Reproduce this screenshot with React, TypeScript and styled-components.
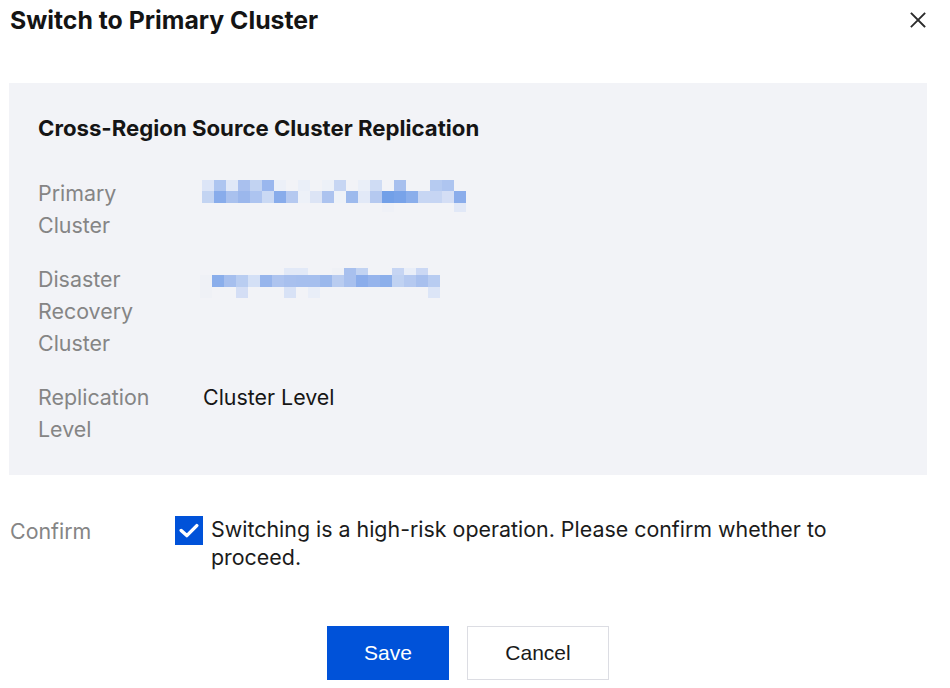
import React from "react";
import styled, { createGlobalStyle } from "styled-components";

const Global = createGlobalStyle`
  html, body { margin: 0; padding: 0; background: #ffffff; }
  body { font-family: Inter, "Noto Sans", "Liberation Sans", sans-serif; color: #1f1f1f; }
  * { box-sizing: border-box; }
`;

const Dialog = styled.div`
  width: 950px;
  height: 688px;
  display: flex;
  flex-direction: column;
`;

const Header = styled.div`
  display: flex;
  align-items: center;
  justify-content: space-between;
  height: 40px;
  padding: 0 22px 0 10px;
`;

const Title = styled.h1`
  margin: 0;
  font-size: 24.8px;
  font-weight: 700;
  color: #141414;
`;

const CloseButton = styled.button`
  border: none;
  background: transparent;
  padding: 0;
  width: 20px;
  height: 20px;
  display: flex;
  align-items: center;
  justify-content: center;
  cursor: pointer;
  color: #2b2b2b;
`;

const Panel = styled.section`
  margin: 43px 23px 0 9px;
  background: #f2f3f7;
  padding: 31px 29px 30px 29px;
  display: flex;
  flex-direction: column;
`;

const PanelTitle = styled.h2`
  margin: 0 0 35px 0;
  font-size: 22.2px;
  line-height: 28px;
  font-weight: 700;
  color: #151515;
`;

const InfoList = styled.dl`
  margin: 0;
  display: flex;
  flex-direction: column;
  gap: 22px;
`;

const InfoRow = styled.div`
  display: grid;
  grid-template-columns: 165px 1fr;
  align-items: start;
`;

const InfoLabel = styled.dt`
  font-size: 21.4px;
  line-height: 32px;
  color: #858585;
  width: 125px;
`;

const InfoValue = styled.dd`
  margin: 0;
  font-size: 21.4px;
  line-height: 32px;
  color: #161616;
`;

const Mosaic = styled.svg<{ $dx: number; $dy: number }>`
  display: block;
  margin-left: ${(p) => p.$dx}px;
  margin-top: ${(p) => p.$dy}px;
`;

const ConfirmRow = styled.div`
  margin: 40px 0 0 10px;
  display: grid;
  grid-template-columns: 165px 1fr;
  align-items: start;
`;

const ConfirmLabel = styled.div`
  font-size: 21.4px;
  line-height: 32px;
  color: #858585;
`;

const CheckLine = styled.label`
  display: flex;
  align-items: flex-start;
  gap: 8px;
  font-size: 21.4px;
  line-height: 28px;
  color: #1b1b1b;
  cursor: pointer;
`;

const CheckBox = styled.span`
  flex: none;
  width: 28px;
  height: 29px;
  margin-top: 1px;
  background: #0052d9;
  display: flex;
  align-items: center;
  justify-content: center;
`;

const CheckText = styled.span`
  max-width: 660px;
`;

const Footer = styled.div`
  margin: 55px 23px 0 9px;
  display: flex;
  justify-content: center;
  gap: 18px;
`;

const Button = styled.button<{ $primary?: boolean; $w: number }>`
  width: ${(p) => p.$w}px;
  height: 54px;
  font-family: "Liberation Sans", Arial, sans-serif;
  font-size: 21px;
  border: 1px solid ${(p) => (p.$primary ? "#0052d9" : "#dcdde3")};
  background: ${(p) => (p.$primary ? "#0052d9" : "#ffffff")};
  color: ${(p) => (p.$primary ? "#ffffff" : "#1a1a1a")};
  cursor: pointer;
  padding: 0;
`;

// Masked cluster identifiers, drawn as pixel blocks
const B = "";
const primaryBlocks: string[][] = [
  ["#dce5f7", "#adc5f0", "#e0e8f7", "#a9c0ee", "#c2d3f2", "#9ab7ee", "#ecf0f8", B, "#eaeff8", B, "#edf1f8", "#c7d6f3", B, "#eaeff8", "#cfdcf4", B, "#a8c0ee", B, B, "#b6cbf1", "#aec5f0", B],
  ["#c3d4f2", "#88aceb", "#a9c1ee", "#9bb7ec", "#adc4f0", "#cad9f4", "#88aceb", "#b5c9f0", "#edf1f8", "#dce4f5", "#acc3ef", "#eef2f8", "#9dbaed", "#e2e9f7", "#b5c9f0", "#72a0e8", "#78a3e9", "#8aaeeb", "#c7d6f3", "#c6d5f3", "#d4def5", "#8badeb"],
  [B, B, B, B, B, B, B, B, B, B, B, B, B, B, B, "#eff1f7", B, B, B, B, B, "#e1e8f7"],
];

const drBlocks: string[][] = [
  [B, B, B, B, B, B, B, "#e2e9f7", "#e2e9f7", B, B, "#eff1f6", "#a8c0ee", "#c2d3f2", B, B, "#c6d5f3", "#e9eef8", "#cbd8f4", B],
  ["#eff1f6", "#8aaeeb", "#a6bfee", "#b9cdf1", "#d4e0f6", "#97b5ec", "#aec4ef", "#a8c0ee", "#a6bfee", "#a6bfee", "#9bb8ec", "#b9ccf0", "#a8c0ee", "#8badeb", "#96b4ec", "#8cafeb", "#c0d2f2", "#b5c9f0", "#a8c0ee", "#b8ccf1"],
  ["#eff1f6", B, B, "#d4def5", B, B, B, "#d8e2f6", B, "#e9eef8", B, B, B, B, B, B, B, B, B, "#dce5f7"],
];

function BlockImage({ rows, heights, dx, dy }: { rows: string[][]; heights: number[]; dx: number; dy: number }) {
  const cols = rows[0].length;
  const total = heights.reduce((a, b) => a + b, 0);
  let y = 0;
  const rects: React.ReactNode[] = [];
  rows.forEach((row, r) => {
    row.forEach((c, i) => {
      if (c) rects.push(<rect key={`${r}-${i}`} x={i * 12} y={y} width={12} height={heights[r]} fill={c} />);
    });
    y += heights[r];
  });
  return (
    <Mosaic $dx={dx} $dy={dy} width={cols * 12} height={total} viewBox={`0 0 ${cols * 12} ${total}`}>
      {rects}
    </Mosaic>
  );
}

export default function App() {
  return (
    <>
      <Global />
      <Dialog>
        <Header>
          <Title>Switch to Primary Cluster</Title>
          <CloseButton aria-label="close">
            <svg width="16" height="16" viewBox="0 0 16 16">
              <path d="M1.5 1.5 L14.5 14.5 M14.5 1.5 L1.5 14.5" stroke="currentColor" strokeWidth="1.8" strokeLinecap="square" />
            </svg>
          </CloseButton>
        </Header>

        <Panel>
          <PanelTitle>Cross-Region Source Cluster Replication</PanelTitle>
          <InfoList>
            <InfoRow>
              <InfoLabel>Primary Cluster</InfoLabel>
              <InfoValue>
                <BlockImage rows={primaryBlocks} heights={[11, 12, 9]} dx={-1} dy={3} />
              </InfoValue>
            </InfoRow>
            <InfoRow>
              <InfoLabel>Disaster Recovery Cluster</InfoLabel>
              <InfoValue>
                <BlockImage rows={drBlocks} heights={[7, 12, 11]} dx={-3} dy={5} />
              </InfoValue>
            </InfoRow>
            <InfoRow>
              <InfoLabel>Replication Level</InfoLabel>
              <InfoValue>Cluster Level</InfoValue>
            </InfoRow>
          </InfoList>
        </Panel>

        <ConfirmRow>
          <ConfirmLabel>Confirm</ConfirmLabel>
          <CheckLine>
            <CheckBox>
              <svg width="20" height="15" viewBox="0 0 20 15">
                <path d="M2.2 7.5 L7.8 12.6 L17.8 2.6" fill="none" stroke="#ffffff" strokeWidth="3.4" strokeLinecap="round" strokeLinejoin="round" />
              </svg>
            </CheckBox>
            <CheckText>Switching is a high-risk operation. Please confirm whether to proceed.</CheckText>
          </CheckLine>
        </ConfirmRow>

        <Footer>
          <Button $primary $w={122}>Save</Button>
          <Button $w={142}>Cancel</Button>
        </Footer>
      </Dialog>
    </>
  );
}
